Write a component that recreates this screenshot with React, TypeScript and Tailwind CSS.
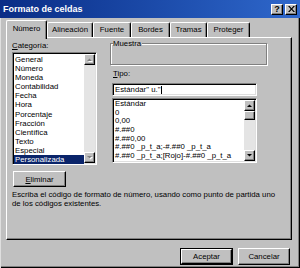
import React from "react";

const categorias = [
  "General",
  "Número",
  "Moneda",
  "Contabilidad",
  "Fecha",
  "Hora",
  "Porcentaje",
  "Fracción",
  "Científica",
  "Texto",
  "Especial",
  "Personalizada",
];

const tipos = [
  "Estándar",
  "0",
  "0,00",
  "#.##0",
  "#.##0,00",
  "#.##0 _p_t_a;-#.##0 _p_t_a",
  "#.##0 _p_t_a;[Rojo]-#.##0 _p_t_a",
];

const raised =
  "border-t border-l border-r border-b border-t-white border-l-white border-r-black border-b-black shadow-[inset_-1px_-1px_0_#808080]";
const sunken =
  "border-t border-l border-r border-b border-t-[#808080] border-l-[#808080] border-r-white border-b-white shadow-[inset_1px_1px_0_#000,inset_-1px_-1px_0_#dfdfdf]";

function Arrow({ up, enabled }: { up?: boolean; enabled: boolean }) {
  const pts = up ? "0,3 5,3 2.5,0.5" : "0,0 5,0 2.5,2.5";
  return (
    <svg width="6" height="4" viewBox="0 0 6 4">
      {!enabled && <polygon points={pts} fill="#fff" transform="translate(1,1)" />}
      <polygon points={pts} fill={enabled ? "#000" : "#808080"} />
    </svg>
  );
}

function ScrollBar({ enabled }: { enabled: boolean }) {
  return (
    <div className="flex w-[11px] shrink-0 flex-col bg-[#e4e4e4]">
      <div className={`flex h-[11px] items-center justify-center bg-[#c0c0c0] ${raised}`}>
        <Arrow up enabled={enabled} />
      </div>
      {enabled && <div className={`h-[9px] bg-[#c0c0c0] ${raised}`} />}
      <div className="flex-1" />
      <div className={`flex h-[11px] items-center justify-center bg-[#c0c0c0] ${raised}`}>
        <Arrow enabled={enabled} />
      </div>
    </div>
  );
}

function Btn({ label, u, def, w }: { label: string; u?: number; def?: boolean; w: string }) {
  const text =
    u === undefined ? (
      label
    ) : (
      <>
        {label.slice(0, u)}
        <span className="underline">{label.slice(u, u + 1)}</span>
        {label.slice(u + 1)}
      </>
    );
  const inner = (
    <div className={`flex h-full w-full items-center justify-center bg-[#c0c0c0] ${raised}`}>
      <span>{text}</span>
    </div>
  );
  return def ? (
    <div className={`${w} border border-black`}>{inner}</div>
  ) : (
    <div className={w}>{inner}</div>
  );
}

export default function App() {
  const tabs = [
    { label: "Número", w: "w-[41px]" },
    { label: "Alineación", w: "w-[46px]" },
    { label: "Fuente", w: "w-[38px]" },
    { label: "Bordes", w: "w-[39px]" },
    { label: "Tramas", w: "w-[37px]" },
    { label: "Proteger", w: "w-[43px]" },
  ];

  return (
    <div className="flex h-[268px] w-[300px] flex-col overflow-hidden bg-[#c0c0c0] font-['Liberation_Sans',Arial,sans-serif] text-[7.8px] leading-[9px] text-black shadow-[inset_1px_0_0_#dfdfdf,inset_-1px_-1px_0_#000,inset_-2px_-2px_0_#808080]">
      {/* barra de título */}
      <div className="flex h-[18px] shrink-0 items-center bg-linear-to-r from-[#0a2c86] to-[#2f68cc] pl-[3px] pr-[3px]">
        <span className="flex-1 text-[9px] font-bold leading-[10px] text-white">Formato de celdas</span>
        <div className={`flex h-[11px] w-[12px] items-center justify-center bg-[#c0c0c0] text-[9px] font-bold leading-[9px] ${raised}`}>
          ?
        </div>
        <div className={`ml-[2px] flex h-[11px] w-[12px] items-center justify-center bg-[#c0c0c0] ${raised}`}>
          <svg width="7" height="6" viewBox="0 0 7 6">
            <path d="M0 0h1.6L3.5 2.2 5.4 0H7L4.3 3 7 6H5.4L3.5 3.8 1.6 6H0l2.7-3z" fill="#000" />
          </svg>
        </div>
      </div>

      {/* pestañas */}
      <div className="mt-[2px] flex h-[17px] shrink-0 items-end pl-[6px]">
        {tabs.map((t, i) =>
          i === 0 ? (
            <div
              key={t.label}
              className={`relative z-10 -mb-[2px] flex h-[19px] ${t.w} items-start justify-center rounded-t-[2px] border-t border-l border-r border-t-white border-l-white border-r-black bg-[#c0c0c0] pt-[3px] shadow-[inset_-1px_0_0_#808080]`}
            >
              {t.label}
            </div>
          ) : (
            <div
              key={t.label}
              className={`flex h-[15px] ${t.w} items-start justify-center rounded-t-[2px] border-t border-l border-r border-t-white border-l-white border-r-black pt-[2px] shadow-[inset_-1px_0_0_#808080]`}
            >
              {t.label}
            </div>
          )
        )}
      </div>

      {/* panel */}
      <div className="ml-[6px] flex h-[203px] w-[286px] shrink-0 flex-col border-t border-l border-r border-b border-t-white border-l-white border-r-black border-b-black pl-[5px] pt-[3px] shadow-[inset_-1px_-1px_0_#808080]">
        <div className="flex">
          <div className="flex w-[85px] flex-col">
            <div className="h-[11px]">
              <span className="underline">C</span>ategoría:
            </div>
            <div className={`flex h-[113px] bg-white ${sunken} p-[1px]`}>
              <div className="flex flex-1 flex-col pt-[1px]">
                {categorias.map((c) => (
                  <div
                    key={c}
                    className={`h-[9.1px] whitespace-nowrap pl-[1px] leading-[9.1px] ${
                      c === "Personalizada" ? "bg-[#0a246a] text-white" : ""
                    }`}
                  >
                    {c}
                  </div>
                ))}
              </div>
              <ScrollBar enabled={false} />
            </div>
          </div>

          <div className="ml-[13px] flex w-[157px] flex-col">
            <div className="relative mt-[2px] h-[22px] border border-[#808080] shadow-[inset_1px_1px_0_#fff,1px_1px_0_#fff]">
              <span className="absolute -top-[5px] left-[2px] bg-[#c0c0c0] pr-[1px]">Muestra</span>
            </div>
            <div className="mt-[4px] ml-[3px] h-[14px]">
              <span className="underline">T</span>ipo:
            </div>
            <div className={`ml-[2px] flex h-[13px] w-[145px] items-center bg-white ${sunken} pl-[2px]`}>
              <span className="whitespace-nowrap">Estándar" u."</span>
              <span className="ml-[1px] h-[8px] w-[1px] bg-black" />
            </div>
            <div className={`ml-[2px] mt-[2px] flex h-[65px] w-[145px] bg-white ${sunken} p-[1px]`}>
              <div className="flex flex-1 flex-col overflow-hidden">
                {tipos.map((t) => (
                  <div key={t} className="h-[8.7px] whitespace-nowrap pl-[1px] leading-[8.7px]">
                    {t}
                  </div>
                ))}
              </div>
              <ScrollBar enabled />
            </div>
          </div>
        </div>

        <div className="ml-[1px] mt-[6px] h-[16px] w-[53px]">
          <Btn label="Eliminar" u={0} w="h-[16px] w-[53px]" />
        </div>

        <p className="mt-[3px]">
          Escriba el código de formato de número, usando como punto de partida uno
          <br />
          de los códigos existentes.
        </p>
      </div>

      {/* botones */}
      <div className="mt-[8px] flex justify-end gap-[5px] pr-[10px]">
        <Btn label="Aceptar" def w="h-[17px] w-[53px]" />
        <Btn label="Cancelar" w="h-[17px] w-[52px]" />
      </div>
    </div>
  );
}
